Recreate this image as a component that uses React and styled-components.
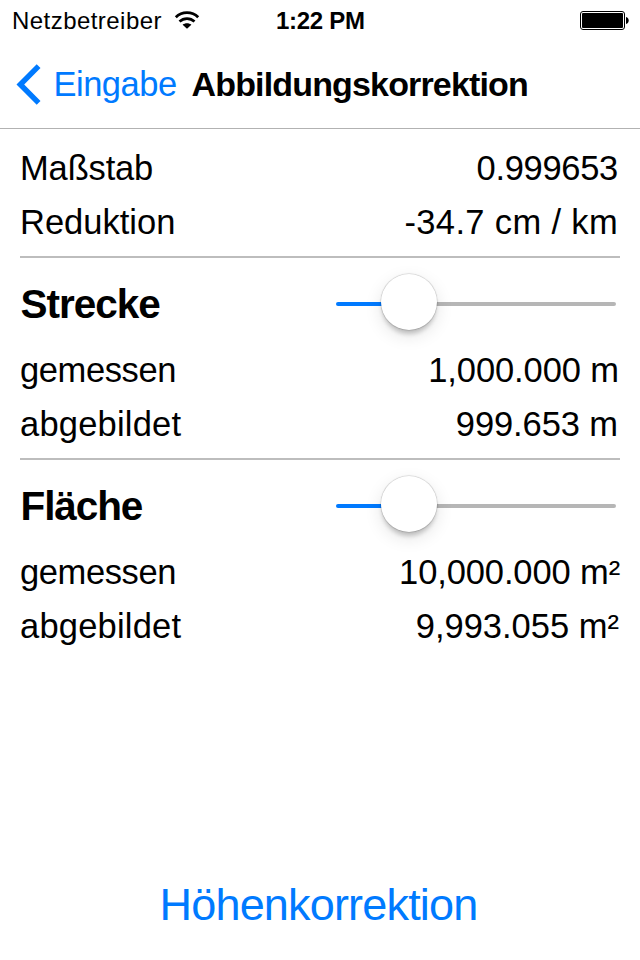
import React from "react";
import styled, { createGlobalStyle } from "styled-components";

const BLUE = "#007aff";

const GlobalStyle = createGlobalStyle`
  * { box-sizing: border-box; }
  body {
    margin: 0;
    background: #fff;
    color: #000;
    font-family: "Liberation Sans", Arial, sans-serif;
  }
`;

const Screen = styled.div`
  width: 640px;
  height: 960px;
  display: flex;
  flex-direction: column;
  background: #fff;
`;

const Text = styled.span`
  white-space: nowrap;
  letter-spacing: ${(p) => p.$tracking || 0}px;
`;

const StatusBar = styled.div`
  display: grid;
  grid-template-columns: 264px 1fr 264px;
  align-items: center;
  height: 40px;
  padding: 1px 11px 0 12px;
  font-size: 24px;
  line-height: 39px;
`;

const Carrier = styled.div`
  display: flex;
  align-items: center;
  gap: 12px;
  height: 39px;
`;

const Clock = styled.div`
  font-weight: bold;
`;

const BatterySlot = styled.div`
  display: flex;
  justify-content: flex-end;
`;

const NavBar = styled.header`
  display: flex;
  align-items: center;
  height: 89px;
  padding-left: 16px;
  border-bottom: 1px solid #b2b2b2;
  font-size: 34.5px;
  line-height: 88px;
`;

const BackButton = styled.button`
  display: flex;
  align-items: center;
  gap: 11.5px;
  width: 175.5px;
  height: 88px;
  padding: 0;
  border: 0;
  background: none;
  color: ${BLUE};
  font: inherit;
`;

const Title = styled.h1`
  margin: 0;
  font-size: 34px;
  font-weight: bold;
`;

const Content = styled.main`
  flex: 1;
  display: flex;
  flex-direction: column;
  padding: 12px 20px 0;
`;

const Row = styled.div`
  display: flex;
  justify-content: space-between;
  height: 54px;
  font-size: 34.5px;
  line-height: 54px;
`;

const Value = styled(Text)`
  margin-right: ${(p) => p.$inset ?? 2}px;
`;

const Divider = styled.hr`
  width: 100%;
  height: 2px;
  margin: 7px 0 0;
  border: 0;
  background: #bdbdbd;
`;

const SectionHead = styled.div`
  display: flex;
  align-items: center;
  justify-content: space-between;
  height: 85px;
  padding: 7px 4px 0 0;
`;

const Heading = styled.h2`
  margin: 0 0 0 0.5px;
  font-size: 40.5px;
  line-height: 78px;
`;

const Track = styled.div`
  display: flex;
  align-items: center;
  width: 280px;
  height: 4px;
  border-radius: 2px;
  background: linear-gradient(to right, ${BLUE} 73px, #b6b6b6 73px);
`;

const Thumb = styled.div`
  flex: none;
  width: 56px;
  height: 56px;
  margin: -4px 0 0 45px;
  border-radius: 50%;
  background: #fff;
  box-shadow: 0 0 1px 0.5px rgba(0, 0, 0, 0.2), 0 5px 4px -1px rgba(0, 0, 0, 0.19),
    0 6px 18px rgba(0, 0, 0, 0.11);
`;

const Footer = styled.footer`
  display: flex;
  justify-content: center;
  height: 112px;
  padding: 2px 3px 0 0;
`;

const LinkButton = styled.button`
  padding: 0;
  border: 0;
  background: none;
  color: ${BLUE};
  font-family: inherit;
  font-size: 45px;
  line-height: 110px;
`;

const WifiIcon = () => (
  <svg width="26" height="19" viewBox="0 0 26 19" fill="none" stroke="#000">
    <path d="M1.8 6.2C8 .1 18 .1 24.2 6.2" strokeWidth="2.8" />
    <path d="M5.5 10.6C9.8 6.5 16.2 6.5 20.5 10.6" strokeWidth="2.7" />
    <path d="M13 17.8L8.6 13.7C11.1 11.7 14.9 11.7 17.4 13.7Z" fill="#000" stroke="none" />
  </svg>
);

const BatteryIcon = () => (
  <svg width="49" height="19" viewBox="0 0 49 19">
    <rect x="0.5" y="0.5" width="44" height="18" rx="2.5" fill="none" stroke="#000" />
    <rect x="2" y="2" width="41" height="15" rx="1" />
    <path d="M46 6C49.6 6.6 49.6 12.4 46 13Z" />
  </svg>
);

const BackIcon = () => (
  <svg width="26" height="42" viewBox="0 0 26 42">
    <path d="M0.5 21.5L20.7 1.3L24.5 5.1L8.2 21.5L24.5 37.9L20.7 41.7Z" fill={BLUE} />
  </svg>
);

const DataRow = ({ label, value, tracking, valueTracking, inset }) => (
  <Row>
    <Text $tracking={tracking}>{label}</Text>
    <Value $tracking={valueTracking} $inset={inset}>{value}</Value>
  </Row>
);

const SliderHead = ({ title, tracking }) => (
  <SectionHead>
    <Heading><Text $tracking={tracking}>{title}</Text></Heading>
    <Track role="slider" aria-label={title} aria-valuenow={26}>
      <Thumb />
    </Track>
  </SectionHead>
);

export default function App() {
  return (
    <>
      <GlobalStyle />
      <Screen>
        <StatusBar>
          <Carrier>
            <Text $tracking={0.45}>Netzbetreiber</Text>
            <WifiIcon />
          </Carrier>
          <Clock><Text $tracking={-0.3}>1:22 PM</Text></Clock>
          <BatterySlot><BatteryIcon /></BatterySlot>
        </StatusBar>
        <NavBar>
          <BackButton>
            <BackIcon />
            <Text $tracking={-0.5}>Eingabe</Text>
          </BackButton>
          <Title><Text $tracking={-0.84}>Abbildungskorrektion</Text></Title>
        </NavBar>
        <Content>
          <DataRow label="Maßstab" value="0.999653" tracking={-0.15} valueTracking={-0.3} />
          <DataRow label="Reduktion" value="-34.7 cm / km" valueTracking={0.35} />
          <Divider />
          <SliderHead title="Strecke" tracking={-1} />
          <DataRow label="gemessen" value="1,000.000 m" tracking={-0.4} valueTracking={-0.1} inset={1} />
          <DataRow label="abgebildet" value="999.653 m" tracking={0.2} valueTracking={-0.1} />
          <Divider />
          <SliderHead title="Fläche" tracking={-1.1} />
          <DataRow label="gemessen" value="10,000.000 m²" tracking={-0.4} valueTracking={-0.12} inset={0} />
          <DataRow label="abgebildet" value="9,993.055 m²" tracking={0.2} inset={1} />
        </Content>
        <Footer>
          <LinkButton><Text $tracking={-0.82}>Höhenkorrektion</Text></LinkButton>
        </Footer>
      </Screen>
    </>
  );
}
